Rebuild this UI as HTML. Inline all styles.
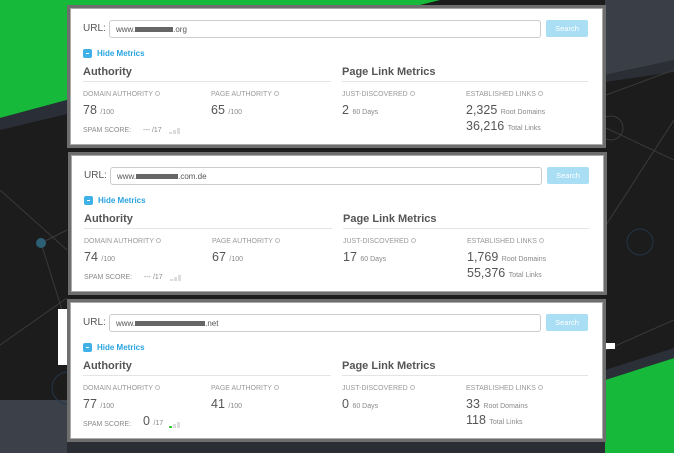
<!DOCTYPE html>
<html><head><meta charset="utf-8"><style>
*{margin:0;padding:0;box-sizing:border-box}
body{width:674px;height:453px;overflow:hidden;position:relative;background:#1c1c1c;font-family:"Liberation Sans",Arial,sans-serif}
.bg{position:absolute;left:0;top:0}
.p{position:absolute;width:539px;height:143px;background:#fff;border:3px solid #6e6e6e;box-shadow:0 0 0 1px #aaa inset}
.a{position:absolute;white-space:nowrap;line-height:1}
.url{left:13px;top:16px;font-size:10px;color:#555}
.in{position:absolute;left:39px;top:12px;width:432px;height:18px;border:1px solid #ccc;border-radius:3px;font-size:8px;color:#555;padding:4px 6px}
.red{display:inline-block;height:5px;background:#666;vertical-align:middle}
.btn{position:absolute;left:476px;top:12px;width:42px;height:17px;background:#a9def5;border-radius:2px;color:#fff;font-size:7.5px;text-align:center;line-height:17px}
.ic{position:absolute;left:13px;top:41px;width:9px;height:9px;background:#3fb0e8;border-radius:2px}
.ic:after{content:"";position:absolute;left:3px;top:4px;width:3px;height:1px;background:#fff}
.hm{left:27px;top:42px;font-size:8px;font-weight:bold;color:#29a4e0}
.h{top:59px;font-size:11px;font-weight:bold;color:#555}
.ln{position:absolute;top:73px;height:1px;background:#e4e4e4}
.lb{top:83px;font-size:7px;color:#999}
.lb i{font-style:normal;display:inline-block;width:5px;height:5px;border-radius:50%;border:1px solid #bbb;margin-left:2px;vertical-align:0}
.n{font-size:12.5px;color:#555}
.n small{font-size:7px;color:#888}
.sp{top:119px;font-size:7px;color:#888}
.bar{position:absolute;top:120px;width:3px;background:#ddd}
</style></head><body>
<svg class="bg" width="674" height="453">
<polygon points="0,0 440,0 420,5 330,22 67,100 0,118" fill="#17b93a"/>
<polygon points="0,118 67,100 200,62 67,114 0,130" fill="#2a2e36"/>
<polygon points="605,0 674,0 674,60 605,75" fill="#3a3e46"/>
<polygon points="605,75 674,60 674,72 605,82" fill="#2b2e35"/>
<polygon points="0,400 67,400 67,453 0,453" fill="#3b4049"/>
<rect x="67" y="441" width="538" height="12" fill="#2a2d33"/>
<polygon points="605,380 674,358 674,453 605,453" fill="#17b93a"/>
<polygon points="605,370 674,348 674,358 605,380" fill="#2b2f37"/>
<g stroke="#3a3a3a" stroke-width="1" fill="none">
<line x1="0" y1="190" x2="67" y2="250"/><line x1="41" y1="243" x2="67" y2="230"/>
<line x1="41" y1="243" x2="62" y2="310"/><line x1="0" y1="345" x2="67" y2="298"/>
<line x1="606" y1="95" x2="674" y2="70"/><line x1="606" y1="128" x2="674" y2="160"/>
<line x1="606" y1="225" x2="674" y2="120"/><line x1="606" y1="350" x2="674" y2="320"/>
</g>
<circle cx="41" cy="243" r="5" fill="#2d5f75"/>
<circle cx="611" cy="128" r="12" stroke="#3a3a3a" fill="none"/>
<circle cx="640" cy="242" r="13" stroke="#24374a" fill="none"/>
<circle cx="68" cy="388" r="16" stroke="#24374a" fill="none"/>
<rect x="58" y="309" width="9" height="56" fill="#fff"/>
<rect x="605" y="343" width="10" height="6" fill="#fff"/>
</svg>

<div class="p" style="left:67px;top:5px">
<div class="a url">URL:</div><div class="in">www.<span class="red" style="width:38px"></span>.org</div><div class="btn">Search</div>
<div class="ic"></div><div class="a hm">Hide Metrics</div>
<div class="a h" style="left:13px">Authority</div><div class="ln" style="left:13px;width:248px"></div>
<div class="a h" style="left:272px">Page Link Metrics</div><div class="ln" style="left:272px;width:246px"></div>
<div class="a lb" style="left:13px">DOMAIN AUTHORITY<i></i></div><div class="a lb" style="left:141px">PAGE AUTHORITY<i></i></div>
<div class="a lb" style="left:272px">JUST-DISCOVERED<i></i></div><div class="a lb" style="left:396px">ESTABLISHED LINKS<i></i></div>
<div class="a n" style="left:13px;top:96px">78 <small>/100</small></div><div class="a n" style="left:141px;top:96px">65 <small>/100</small></div>
<div class="a n" style="left:272px;top:96px">2 <small>60 Days</small></div>
<div class="a n" style="left:396px;top:96px">2,325 <small>Root Domains</small></div>
<div class="a n" style="left:396px;top:112px">36,216 <small>Total Links</small></div>
<div class="a sp" style="left:13px">SPAM SCORE:</div><div class="a sp" style="left:73px">--- /17</div>
<div class="bar" style="left:99px;top:124px;height:2px"></div><div class="bar" style="left:103px;top:122px;height:4px"></div><div class="bar" style="left:107px;height:6px"></div>
</div>

<div class="p" style="left:68px;top:152px">
<div class="a url">URL:</div><div class="in">www.<span class="red" style="width:42px"></span>.com.de</div><div class="btn">Search</div>
<div class="ic"></div><div class="a hm">Hide Metrics</div>
<div class="a h" style="left:13px">Authority</div><div class="ln" style="left:13px;width:248px"></div>
<div class="a h" style="left:272px">Page Link Metrics</div><div class="ln" style="left:272px;width:246px"></div>
<div class="a lb" style="left:13px">DOMAIN AUTHORITY<i></i></div><div class="a lb" style="left:141px">PAGE AUTHORITY<i></i></div>
<div class="a lb" style="left:272px">JUST-DISCOVERED<i></i></div><div class="a lb" style="left:396px">ESTABLISHED LINKS<i></i></div>
<div class="a n" style="left:13px;top:96px">74 <small>/100</small></div><div class="a n" style="left:141px;top:96px">67 <small>/100</small></div>
<div class="a n" style="left:272px;top:96px">17 <small>60 Days</small></div>
<div class="a n" style="left:396px;top:96px">1,769 <small>Root Domains</small></div>
<div class="a n" style="left:396px;top:112px">55,376 <small>Total Links</small></div>
<div class="a sp" style="left:13px">SPAM SCORE:</div><div class="a sp" style="left:73px">--- /17</div>
<div class="bar" style="left:99px;top:124px;height:2px"></div><div class="bar" style="left:103px;top:122px;height:4px"></div><div class="bar" style="left:107px;height:6px"></div>
</div>

<div class="p" style="left:67px;top:299px">
<div class="a url">URL:</div><div class="in">www.<span class="red" style="width:70px"></span>.net</div><div class="btn">Search</div>
<div class="ic"></div><div class="a hm">Hide Metrics</div>
<div class="a h" style="left:13px">Authority</div><div class="ln" style="left:13px;width:248px"></div>
<div class="a h" style="left:272px">Page Link Metrics</div><div class="ln" style="left:272px;width:246px"></div>
<div class="a lb" style="left:13px">DOMAIN AUTHORITY<i></i></div><div class="a lb" style="left:141px">PAGE AUTHORITY<i></i></div>
<div class="a lb" style="left:272px">JUST-DISCOVERED<i></i></div><div class="a lb" style="left:396px">ESTABLISHED LINKS<i></i></div>
<div class="a n" style="left:13px;top:96px">77 <small>/100</small></div><div class="a n" style="left:141px;top:96px">41 <small>/100</small></div>
<div class="a n" style="left:272px;top:96px">0 <small>60 Days</small></div>
<div class="a n" style="left:396px;top:96px">33 <small>Root Domains</small></div>
<div class="a n" style="left:396px;top:112px">118 <small>Total Links</small></div>
<div class="a sp" style="left:13px">SPAM SCORE:</div><div class="a n" style="left:73px;top:113px">0 <small>/17</small></div>
<div class="bar" style="left:99px;top:124px;height:2px;background:#3c3"></div><div class="bar" style="left:103px;top:122px;height:4px"></div><div class="bar" style="left:107px;height:6px"></div>
</div>
</body></html>
